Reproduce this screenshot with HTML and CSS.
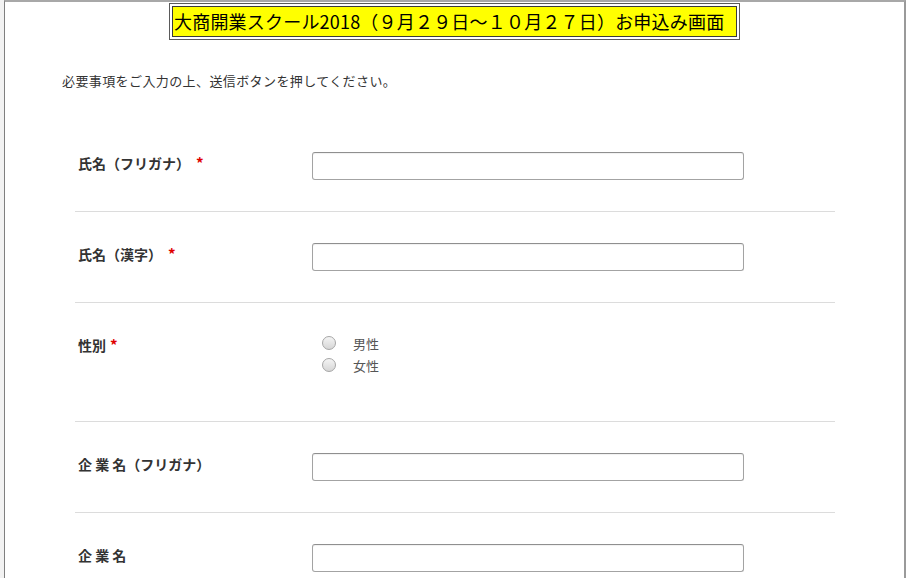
FILE: index.html
```html
<!DOCTYPE html>
<html lang="ja">
<head>
<meta charset="utf-8">
<title>お申込み画面</title>
<link rel="stylesheet" href="styles.css">
</head>
<body>
<div class="frame">
  <div class="title-wrap">
    <div class="title-box"><h1 class="title">大商開業スクール2018（９月２９日～１０月２７日）お申込み画面</h1></div>
  </div>
  <p class="intro">必要事項をご入力の上、送信ボタンを押してください。</p>
  <form class="form">
    <div class="row">
      <div class="label">氏名（フリガナ）<span class="req">*</span></div>
      <div class="field"><input class="text" type="text"></div>
    </div>
    <div class="row">
      <div class="label">氏名（漢字）<span class="req">*</span></div>
      <div class="field"><input class="text" type="text"></div>
    </div>
    <div class="row row-radio">
      <div class="label label-radio">性別<span class="req">*</span></div>
      <div class="field radios">
        <label class="radio"><span class="dot"></span><span>男性</span></label>
        <label class="radio"><span class="dot"></span><span>女性</span></label>
      </div>
    </div>
    <div class="row">
      <div class="label">企 業 名（フリガナ）</div>
      <div class="field"><input class="text" type="text"></div>
    </div>
    <div class="row">
      <div class="label">企 業 名</div>
      <div class="field"><input class="text" type="text"></div>
    </div>
  </form>
</div>
</body>
</html>
```
FILE: styles.css
```css
html, body {
  margin: 0;
  padding: 0;
  height: 100%;
  overflow: hidden;
}
body {
  background: #f2f2f2;
  font-family: "Noto Sans CJK JP", "Noto Sans", sans-serif;
  color: #333;
}
.frame {
  margin-left: 4px;
  width: 902px;
  height: 578px;
  box-sizing: border-box;
  background: #fff;
  border-left: 1px solid #7f7f7f;
  border-top: 2px solid #a8a8a8;
  border-right: 2px solid #9a9a9a;
  overflow: hidden;
}
.title-wrap {
  display: flex;
  justify-content: center;
  padding-top: 1px;
}
.title-box {
  width: 571px;
  box-sizing: border-box;
  border: 1px solid #5a5a5a;
  padding: 2px;
  background: #fff;
}
.title {
  margin: 0;
  background: #ffff00;
  border: 1px solid #3a3a3a;
  font-size: 18px;
  font-weight: normal;
  line-height: 29px;
  height: 29px;
  padding-left: 1px;
  color: #000;
  white-space: nowrap;
  overflow: hidden;
  letter-spacing: 0.2px;
}
.intro {
  margin: 31px 0 0 57px;
  font-size: 13px;
  letter-spacing: 0.4px;
  line-height: 20px;
  color: #333;
}
.form {
  margin: 30px 0 0 70px;
  width: 760px;
}
.row {
  display: flex;
  padding: 31px 0;
  border-bottom: 1px solid #dcdcdc;
}
.row:last-child {
  border-bottom: none;
}
.label {
  width: 234px;
  padding-left: 3px;
  padding-top: 1px;
  font-size: 14px;
  font-weight: bold;
  line-height: 20px;
  color: #333;
  white-space: pre;
}
.req {
  color: #e00000;
  font-size: 15px;
  font-weight: bold;
  margin-left: 6px;
}
.label-radio {
  padding-top: 1px;
}
.label-radio .req {
  margin-left: 4px;
}
.field {
  flex: 1;
}
.text {
  display: block;
  width: 432px;
  height: 28px;
  box-sizing: border-box;
  margin: 0;
  border: 1px solid #a3a3a3;
  border-top-color: #8f8f8f;
  border-radius: 3px;
  background: #fff;
  box-shadow: inset 0 1px 1px rgba(0,0,0,0.06);
}
.radios {
  display: flex;
  flex-direction: column;
  margin-top: -2px;
  padding-left: 10px;
  min-height: 58px;
}
.radio {
  display: flex;
  align-items: center;
  height: 22px;
  font-size: 13px;
  color: #555;
}
.dot {
  width: 12px;
  height: 12px;
  border-radius: 50%;
  border: 1px solid #a6a6a6;
  background: linear-gradient(#f4f4f4, #d6d6d6);
  margin-right: 17px;
}
```
